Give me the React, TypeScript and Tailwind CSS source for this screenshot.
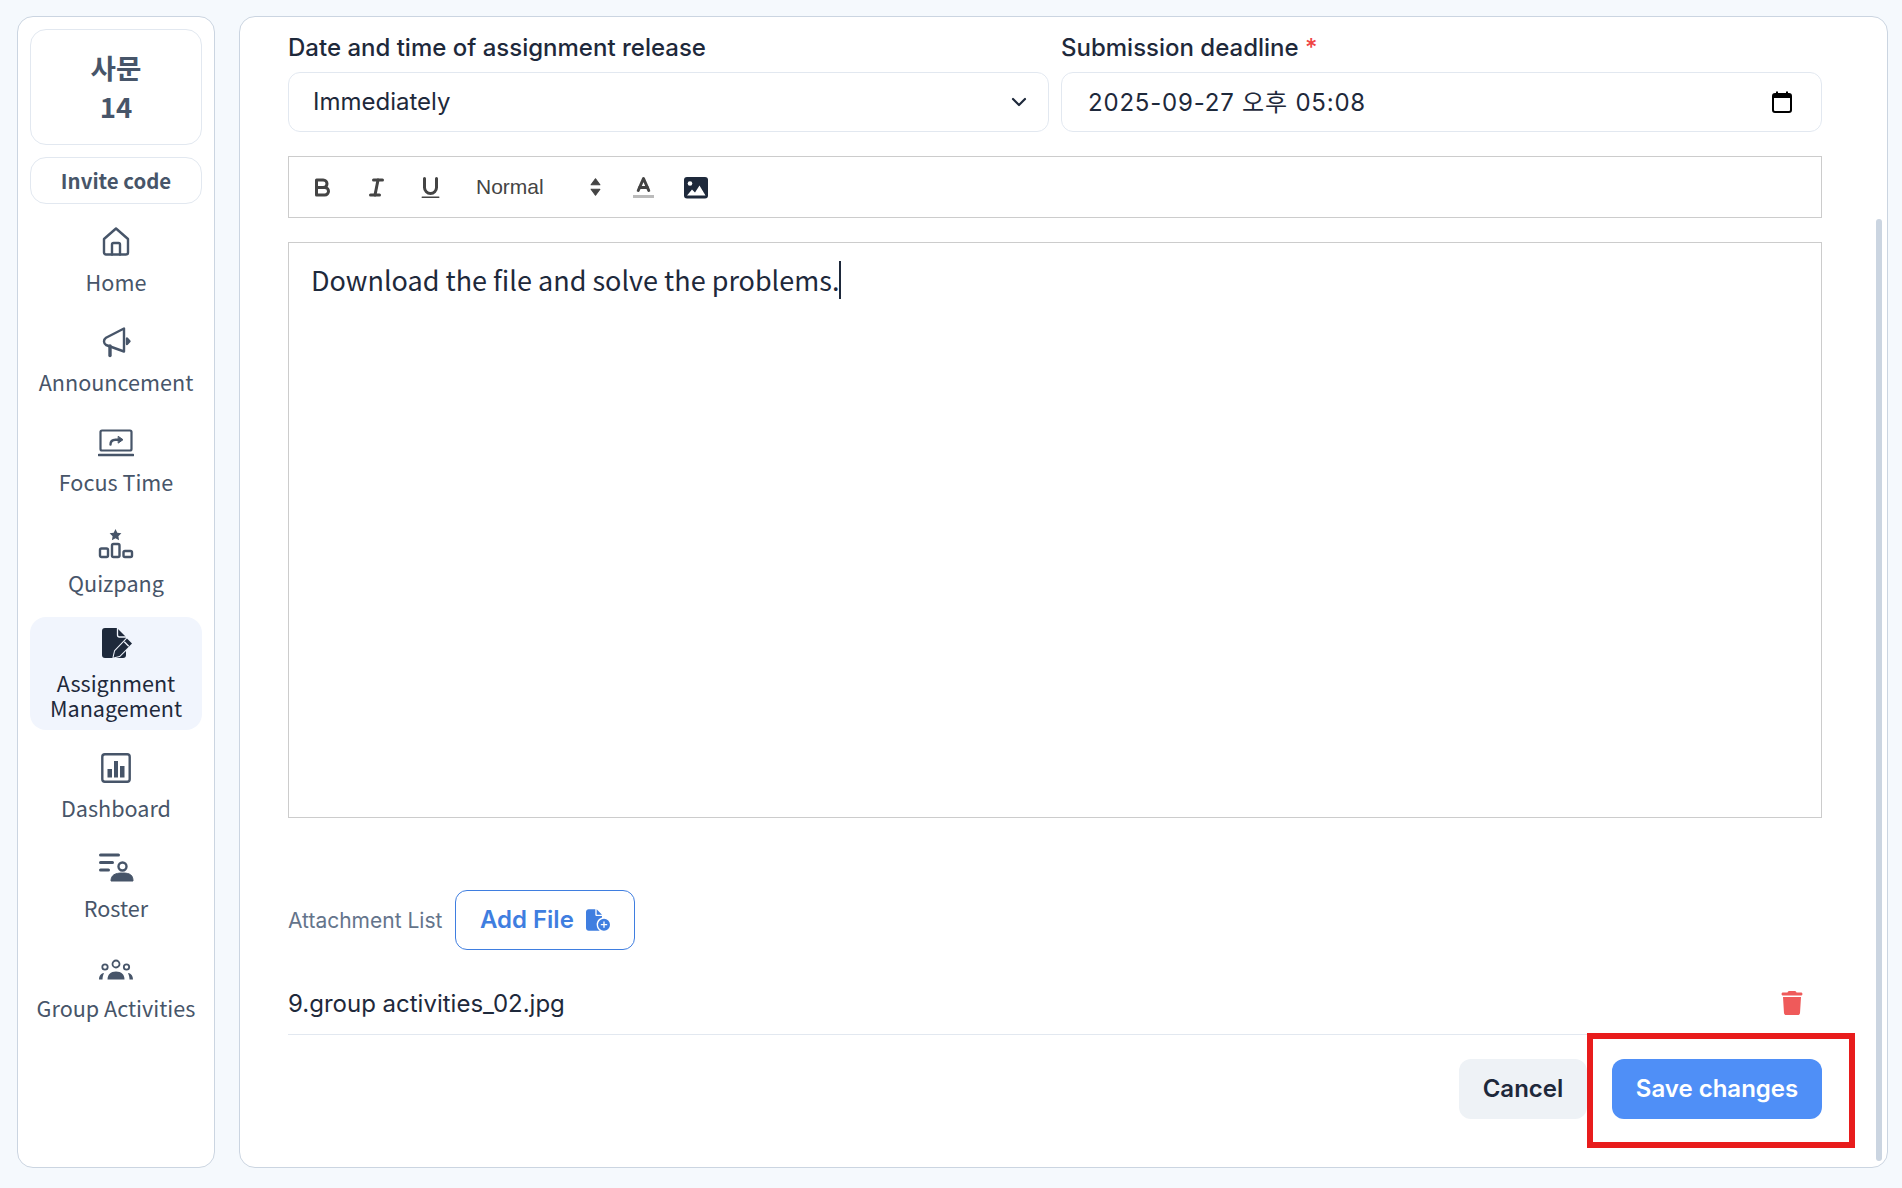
import React from "react";
import { FaFileCirclePlus, FaTrash } from "react-icons/fa6";

const sidebarFont = "font-['Noto_Sans_CJK_KR','Noto_Sans',sans-serif]";

function HomeIcon() {
  return (
    <svg viewBox="0 0 32 32" className="w-8 h-8" fill="none" stroke="#475569" strokeWidth="2.400" strokeLinejoin="round" strokeLinecap="round">
      <path d="M4 13 16 2.500 28 13v13.500a2 2 0 0 1-2 2H6a2 2 0 0 1-2-2z" />
      <path d="M12 28.500V18.500a1.500 1.500 0 0 1 1.500-1.500h5a1.500 1.500 0 0 1 1.500 1.500v10" />
    </svg>
  );
}
function MegaphoneIcon() {
  return (
    <svg viewBox="0 0 32 32" className="w-8 h-8" fill="none" stroke="#475569" strokeWidth="2.400" strokeLinejoin="round" strokeLinecap="round">
      <path d="M24 2.500v23L6 19a4.500 4.500 0 0 1-2-3.500c0-1.500.7-2.800 2-3.700z" />
      <path d="M10 20v9.500" strokeWidth="3.400" />
      <path d="M27 12.500v5.500l2.500-2.700z" fill="#475569" />
    </svg>
  );
}
function LaptopIcon() {
  return (
    <svg viewBox="0 0 36 28" className="w-9 h-7 mt-[2px]" fill="none" stroke="#475569" strokeWidth="2.200" strokeLinejoin="round" strokeLinecap="round">
      <rect x="2.500" y="1.500" width="31" height="20" rx="1.500" />
      <path d="M1 26h34" strokeWidth="2.600" />
      <path d="M12.500 15.500c0-3.300 2-4.800 5-4.800h4" strokeWidth="2.400" />
      <path d="M20.500 7.500 25 10.700l-4.500 3.200z" fill="#475569" strokeWidth="1" />
    </svg>
  );
}
function QuizIcon() {
  return (
    <svg viewBox="0 0 36 32" className="w-9 h-8 mt-[3px]" fill="none" stroke="#475569" strokeWidth="2.400" strokeLinejoin="round">
      <path d="m17.500 1 1.800 3.700 4.100.6-3 2.900.7 4-3.600-1.900-3.600 1.900.7-4-3-2.900 4.100-.6z" fill="#475569" stroke="none" />
      <rect x="2" y="20.500" width="8" height="8.500" rx="1.500" />
      <rect x="14" y="16" width="7.500" height="13" rx="1.500" />
      <rect x="25.500" y="23" width="8.500" height="6" rx="1.500" />
    </svg>
  );
}
function FilePenIcon() {
  return (
    <svg viewBox="0 0 30 30" className="w-[30px] h-[30px] ml-[2px]">
      <path d="M3 0H15L24 9V27A3 3 0 0 1 21 30H3A3 3 0 0 1 0 27V3A3 3 0 0 1 3 0Z" fill="#1e293b" />
      <path d="M15.500 0V7a2 2 0 0 0 2 2H24" fill="none" stroke="#f1f5fd" strokeWidth="1.300" />
      <path d="M25 10.500 30 15.500 17.500 28l-6 1.500 1.500-6.500z" fill="#1e293b" stroke="#f1f5fd" strokeWidth="2" strokeLinejoin="round" paintOrder="stroke" />
      <path d="M22.300 13.800 26.700 18.200" stroke="#f1f5fd" strokeWidth="1.300" />
    </svg>
  );
}
function ChartIcon() {
  return (
    <svg viewBox="0 0 32 32" className="w-8 h-8">
      <rect x="2.300" y="2.300" width="27.400" height="27.400" rx="2.500" fill="none" stroke="#475569" strokeWidth="2.400" />
      <rect x="7.500" y="17" width="4.500" height="8.500" fill="#475569" />
      <rect x="14" y="9" width="4" height="16.500" fill="#475569" />
      <rect x="20" y="14" width="4.500" height="11.500" fill="#475569" />
    </svg>
  );
}
function RosterIcon() {
  return (
    <svg viewBox="0 0 36 32" className="w-9 h-8">
      <rect x="1" y="1.500" width="21" height="3" rx="1.500" fill="#475569" />
      <rect x="1" y="9" width="15" height="3" rx="1.500" fill="#475569" />
      <rect x="1" y="16.500" width="11" height="3" rx="1.500" fill="#475569" />
      <circle cx="24.500" cy="14.500" r="4" fill="none" stroke="#475569" strokeWidth="2.400" />
      <path d="M13 29c0-6 4-8 11.500-8S35 23 35 29z" fill="#475569" stroke="#475569" strokeLinejoin="round" />
    </svg>
  );
}
function GroupIcon() {
  return (
    <svg viewBox="0 0 36 22" className="w-9 h-[22px] mt-[3px]" fill="none" stroke="#475569" strokeWidth="1.800">
      <circle cx="18" cy="5" r="3.500" />
      <circle cx="7" cy="8" r="2.700" />
      <circle cx="28.500" cy="8" r="2.700" />
      <path d="M9.500 20.500c0-5 3-8 8.500-8s8.500 3 8.500 8z" fill="#475569" stroke="none" />
      <path d="M1 20.500c0-3 1.500-6 5-6.500-.8 2-1.500 4-1.500 6.500z" fill="#475569" stroke="none" />
      <path d="M35 20.500c0-3-1.500-6-5-6.500.8 2 1.500 4 1.500 6.500z" fill="#475569" stroke="none" />
    </svg>
  );
}

function NavItem({ icon, label, active }: { icon: React.ReactNode; label: React.ReactNode; active?: boolean }) {
  return (
    <div className={`flex flex-col items-center rounded-2xl pt-[10px] pb-[9.400px] ${active ? "bg-[#f1f5fd] text-[#1e293b]" : "text-[#475569]"}`}>
      <div className="h-8 flex items-center justify-center">{icon}</div>
      <div className="mt-[12px] text-[21.600px] leading-[24.800px] text-center">{label}</div>
    </div>
  );
}

function QlBold() {
  return (
    <svg viewBox="0 0 18 18" className="w-[27px] h-[27px]" fill="none" stroke="#444" strokeWidth="2" strokeLinecap="round" strokeLinejoin="round">
      <path d="M5,4H9.5A2.5,2.5,0,0,1,12,6.5v0A2.5,2.5,0,0,1,9.5,9H5A0,0,0,0,1,5,9V4A0,0,0,0,1,5,4Z" />
      <path d="M5,9h5.5A2.5,2.5,0,0,1,13,11.5v0A2.5,2.5,0,0,1,10.5,14H5a0,0,0,0,1,0,0V9A0,0,0,0,1,5,9Z" />
    </svg>
  );
}
function QlItalic() {
  return (
    <svg viewBox="0 0 18 18" className="w-[27px] h-[27px]" fill="none" stroke="#444" strokeWidth="2" strokeLinecap="round">
      <line x1="7" x2="13" y1="4" y2="4" />
      <line x1="5" x2="11" y1="14" y2="14" />
      <line x1="8" x2="10" y1="14" y2="4" />
    </svg>
  );
}
function QlUnderline() {
  return (
    <svg viewBox="0 0 18 18" className="w-[27px] h-[27px]" fill="none" stroke="#444" strokeWidth="2" strokeLinecap="round">
      <path d="M5,3V9a4.012,4.012,0,0,0,4,4H9a4.012,4.012,0,0,0,4-4V3" />
      <rect x="3" y="15" width="12" height="1" rx=".5" fill="#444" stroke="none" />
    </svg>
  );
}
function QlColor() {
  return (
    <svg viewBox="0 0 18 18" className="w-[27px] h-[27px]" fill="none" stroke="#444" strokeWidth="2" strokeLinecap="round" strokeLinejoin="round">
      <line x1="3" x2="15" y1="15" y2="15" stroke="#bbb" strokeLinecap="square" />
      <polyline points="5.5 11 9 3 12.500 11" />
      <line x1="11.630" x2="6.380" y1="9" y2="9" />
    </svg>
  );
}
function QlImage() {
  return (
    <svg viewBox="0 0 24 22" className="w-6 h-[22px]">
      <rect x="0" y="0" width="24" height="21.500" rx="3" fill="#1e293b" />
      <circle cx="6" cy="6.500" r="2.300" fill="#fff" />
      <path d="M3 18.500 8 12.500l3 3 4.500-7 6 10z" fill="#fff" />
    </svg>
  );
}

const nav: { icon: React.ReactNode; label: React.ReactNode; active?: boolean }[] = [
  { icon: <HomeIcon />, label: "Home" },
  { icon: <MegaphoneIcon />, label: "Announcement" },
  { icon: <LaptopIcon />, label: "Focus Time" },
  { icon: <QuizIcon />, label: "Quizpang" },
  { icon: <FilePenIcon />, label: <>Assignment<br />Management</>, active: true },
  { icon: <ChartIcon />, label: "Dashboard" },
  { icon: <RosterIcon />, label: "Roster" },
  { icon: <GroupIcon />, label: "Group Activities" },
];

export default function App() {
  return (
    <div className="w-[1902px] h-[1188px] bg-[#f5f9fd] flex pl-[17px] pr-[14px] pt-4 pb-5 gap-6 font-['Inter',sans-serif] text-[#1e293b] overflow-hidden">
      <aside className={`w-[198px] shrink-0 bg-white border border-[#cbd5e1] rounded-2xl px-3 pt-3 flex flex-col gap-3 ${sidebarFont}`}>
        <div className="h-[116px] rounded-2xl border border-[#e2e8f0] flex flex-col items-center justify-center text-[27.600px] leading-[39px] font-bold text-[#475569]">
          <div>사문</div>
          <div>14</div>
        </div>
        <div className="h-[47px] rounded-2xl border border-[#e2e8f0] flex items-center justify-center text-[20.400px] font-bold text-[#475569]">
          Invite code
        </div>
        {nav.map((n, i) => (
          <NavItem key={i} icon={n.icon} label={n.label} active={n.active} />
        ))}
      </aside>

      <main className="relative flex-1 bg-white border border-[#cbd5e1] rounded-2xl pl-12 pr-[65px] pt-[13px] overflow-hidden">
        <div className="absolute right-[5px] top-[202px] bottom-[6px] w-[6px] rounded-full bg-[#cbd5e1]" />

        <div className="grid grid-cols-2 gap-3">
          <div>
            <div className="text-2xl leading-9 font-medium">Date and time of assignment release</div>
            <div className="mt-[6px] h-[60px] rounded-xl border border-[#e2e8f0] flex items-center justify-between pl-6 pr-[17px] text-2xl">
              <span>Immediately</span>
              <svg viewBox="0 0 24 24" className="w-6 h-6" fill="none" stroke="#1e293b" strokeWidth="2.200" strokeLinecap="round" strokeLinejoin="round">
                <path d="m6 9 6 6 6-6" />
              </svg>
            </div>
          </div>
          <div>
            <div className="text-2xl leading-9 font-medium">
              Submission deadline <span className="text-[#ef4444]">*</span>
            </div>
            <div className="mt-[6px] h-[60px] rounded-xl border border-[#e2e8f0] flex items-center justify-between pl-[26px] pr-[29px] text-2xl tracking-[0.800px] font-['Inter','Noto_Sans_CJK_KR',sans-serif]">
              <span className="mt-[1px]">2025-09-27 오후 05:08</span>
              <svg viewBox="0 0 20 22" className="w-5 h-[22px]" fill="none">
                <rect x="1" y="3" width="18" height="18" rx="2" stroke="#000" strokeWidth="2" />
                <rect x="1" y="3" width="18" height="4" fill="#000" />
                <rect x="4" y="0.500" width="2" height="3" fill="#000" />
                <rect x="14" y="0.500" width="2" height="3" fill="#000" />
              </svg>
            </div>
          </div>
        </div>

        <div className="mt-6 h-[62px] border border-[#ccc] flex items-center font-['Liberation_Sans',sans-serif] text-[#444]">
          <div className="ml-[6px] w-[54px] flex justify-center"><QlBold /></div>
          <div className="w-[54px] flex justify-center"><QlItalic /></div>
          <div className="w-[54px] flex justify-center"><QlUnderline /></div>
          <div className="ml-[19px] w-[68px] text-[21px]">Normal</div>
          <svg viewBox="0 0 10 18" className="ml-[46px] w-[11px] h-[20px]" fill="#444">
            <path d="M5 1.500 9 7H1z" stroke="#444" strokeLinejoin="round" />
            <path d="M5 16.500 1 11h8z" stroke="#444" strokeLinejoin="round" />
          </svg>
          <div className="ml-[29px] w-[27px]"><QlColor /></div>
          <div className="ml-[27px] w-6 mt-[1px]"><QlImage /></div>
        </div>

        <div className={`mt-[24px] h-[576px] border border-[#ccc] pl-[22px] pt-[17px] text-[27px] leading-10 text-[#1e293b] ${sidebarFont}`}>
          <span className="border-r-2 border-[#1e293b] inline-block leading-[38px]">Download the file and solve the problems.</span>
        </div>

        <div className="mt-[72px] flex items-center gap-[13px]">
          <span className="text-[21px] text-[#64748b] pt-[1px]">Attachment List</span>
          <div className="h-[60px] w-[180px] rounded-xl border-[1.5px] border-[#3f7ee0] flex items-center justify-center gap-[12px] pr-[1px] text-[#3f7ee0] text-2xl font-semibold">
            Add File
            <FaFileCirclePlus className="w-6 h-6" />
          </div>
        </div>

        <div className="mt-[24px] h-[61px] border-b border-[#e2e8f0] flex items-center justify-between pr-[19px] pb-[1px] text-2xl">
          <span>9.group activities_02.jpg</span>
          <FaTrash className="w-[22px] h-6 text-[#ef5a5a] mb-[2px]" />
        </div>

        <div className="mt-6 flex justify-end gap-[25px]">
          <div className="w-[128px] h-[60px] rounded-xl bg-[#eef2f6] flex items-center justify-center text-2xl font-semibold">Cancel</div>
          <div className="relative w-[210px] h-[60px] rounded-xl bg-[#4f8ff7] flex items-center justify-center text-2xl font-semibold text-white">
            Save changes
            <div className="absolute left-[-25px] top-[-26px] w-[268px] h-[115px] border-[6px] border-[#e81c1c]" />
          </div>
        </div>
      </main>
    </div>
  );
}
